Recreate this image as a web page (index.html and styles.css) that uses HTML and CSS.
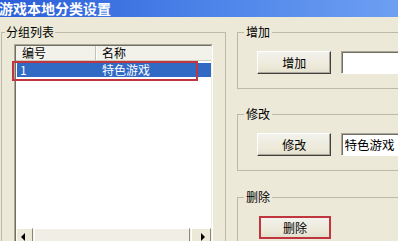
FILE: index.html
```html
<!DOCTYPE html>
<html lang="zh-CN">
<head>
<meta charset="utf-8">
<title>游戏本地分类设置</title>
<link rel="stylesheet" href="styles.css">
</head>
<body>
<div class="window">
  <div class="titlebar"><span class="title">游戏本地分类设置</span></div>
  <div class="client">
    <fieldset class="group group-list">
      <legend>分组列表</legend>
      <div class="listview">
        <div class="lv-inner">
          <div class="lv-header">
            <div class="hcol c-id">编号</div>
            <div class="hcol c-name">名称</div>
          </div>
          <div class="lv-body">
            <div class="lv-row selected">
              <div class="cell c-id">1</div>
              <div class="cell c-name">特色游戏</div>
            </div>
          </div>
          <div class="hscroll">
            <div class="sb-btn sb-left"><span class="arrow-left"></span></div>
            <div class="sb-thumb"></div>
            <div class="sb-btn sb-right"><span class="arrow-right"></span></div>
          </div>
        </div>
        <div class="mark mark-row"></div>
      </div>
    </fieldset>
    <div class="side">
      <fieldset class="group group-side">
        <legend>增加</legend>
        <div class="row">
          <button class="btn">增加</button>
          <div class="field"></div>
        </div>
      </fieldset>
      <fieldset class="group group-side group-edit">
        <legend>修改</legend>
        <div class="row">
          <button class="btn">修改</button>
          <div class="field">特色游戏</div>
        </div>
      </fieldset>
      <fieldset class="group group-side group-del">
        <legend>删除</legend>
        <div class="row row-del">
          <button class="btn btn-marked">删除</button>
        </div>
      </fieldset>
    </div>
  </div>
</div>
</body>
</html>
```
FILE: styles.css
```css
html, body {
  margin: 0;
  padding: 0;
}
body {
  width: 398px;
  height: 241px;
  overflow: hidden;
  background: #ece9d8;
  font-family: "Noto Sans CJK SC", "Noto Sans", sans-serif;
  font-size: 12px;
  color: #000;
}
.window {
  width: 398px;
  height: 241px;
  overflow: hidden;
}
.titlebar {
  height: 17px;
  overflow: hidden;
  background: linear-gradient(to right, #2b5ed8 0%, #4a82e8 50%, #6d9ff2 100%);
}
.title {
  display: block;
  margin-left: -1px;
  color: #fff;
  font-weight: bold;
  font-size: 14px;
  line-height: 17px;
  white-space: nowrap;
}
.client {
  display: flex;
  align-items: flex-start;
  padding: 8px 0 0 1px;
  gap: 11px;
}
.group {
  margin: 0;
  padding: 0;
  min-width: 0;
  border: 1px solid #bcb9a9;
  box-sizing: border-box;
}
.group legend {
  font-size: 12px;
  line-height: 14px;
  padding: 0 1px;
}
.group-list {
  width: 225px;
  height: 260px;
  flex: none;
}
.group-list legend {
  margin-left: 3px;
}
.listview {
  position: relative;
  margin: 5px 0 0 12px;
  width: 199px;
  height: 203px;
  box-sizing: border-box;
  border: 1px solid;
  border-color: #aca899 #fff #fff #aca899;
}
.lv-inner {
  height: 100%;
  box-sizing: border-box;
  border: 1px solid;
  border-color: #716f64 #f1efe2 #f1efe2 #716f64;
  background: #fff;
  display: flex;
  flex-direction: column;
}
.lv-header {
  display: flex;
  height: 14px;
  flex: none;
  background: #f2f1ea;
  border-bottom: 1px solid #cfccbc;
}
.hcol {
  line-height: 14px;
  padding-left: 6px;
  box-sizing: border-box;
}
.hcol.c-id {
  width: 80px;
  border-right: 1px solid #c5c2b2;
}
.hcol.c-name {
  flex: 1;
  border-left: 1px solid #fff;
  padding-left: 5px;
}
.lv-body {
  flex: 1;
  padding-top: 2px;
}
.lv-row {
  display: flex;
  height: 14px;
  line-height: 14px;
  margin-left: 1px;
}
.lv-row.selected {
  background: #316ac5;
  color: #fff;
}
.cell.c-id {
  width: 79px;
  padding-left: 3px;
  box-sizing: border-box;
}
.cell.c-name {
  padding-left: 6px;
}
.hscroll {
  display: flex;
  height: 17px;
  flex: none;
  background: #f4f3ec;
}
.sb-btn,
.sb-thumb {
  box-sizing: border-box;
  background: #ece9d8;
  border: 1px solid;
  border-color: #fff #8a8778 #8a8778 #fff;
}
.sb-btn {
  display: flex;
  align-items: center;
  justify-content: center;
}
.sb-left {
  width: 17px;
  padding-right: 3px;
}
.sb-right {
  width: 20px;
  padding-left: 4px;
}
.sb-thumb {
  flex: 1;
  margin: 0 1px;
  background: #f1efe5;
}
.arrow-left {
  width: 0;
  height: 0;
  border-top: 4px solid transparent;
  border-bottom: 4px solid transparent;
  border-right: 4px solid #000;
}
.arrow-right {
  width: 0;
  height: 0;
  border-top: 4px solid transparent;
  border-bottom: 4px solid transparent;
  border-left: 4px solid #000;
}
.mark {
  position: absolute;
  box-sizing: border-box;
  border: 2px solid #c1363e;
}
.mark-row {
  left: -3px;
  top: 16px;
  width: 186px;
  height: 20px;
}
.side {
  display: flex;
  flex-direction: column;
  flex: none;
}
.group-side {
  width: 175px;
}
.group-side legend {
  margin-left: 6px;
  padding: 0 2px;
}
.group-edit {
  margin-top: 18px;
}
.group-del {
  margin-top: 19px;
  height: 60px;
}
.row {
  display: flex;
  gap: 10px;
  margin: 12px 0 14px 19px;
}
.row-del {
  margin-left: 21px;
}
.btn {
  width: 75px;
  height: 23px;
  box-sizing: border-box;
  margin: 0;
  padding: 0;
  font: inherit;
  color: #000;
  border: 1px solid;
  border-color: #fff #404040 #404040 #fff;
  box-shadow: inset -1px -1px 0 #aca899;
  background: linear-gradient(#f3f2ec, #ece9d8 70%, #e3e0cf);
  display: flex;
  align-items: center;
  justify-content: center;
  line-height: 14px;
}
.btn-marked {
  width: 72px;
  border: 2px solid #c1363e;
  box-shadow: none;
}
.field {
  width: 70px;
  height: 23px;
  box-sizing: border-box;
  border: 1px solid;
  border-color: #aca899 #fff #fff #aca899;
  box-shadow: inset 1px 1px 0 #716f64;
  background: #fff;
  padding-left: 2px;
  line-height: 21px;
  font-size: 12.5px;
  white-space: nowrap;
}
```
